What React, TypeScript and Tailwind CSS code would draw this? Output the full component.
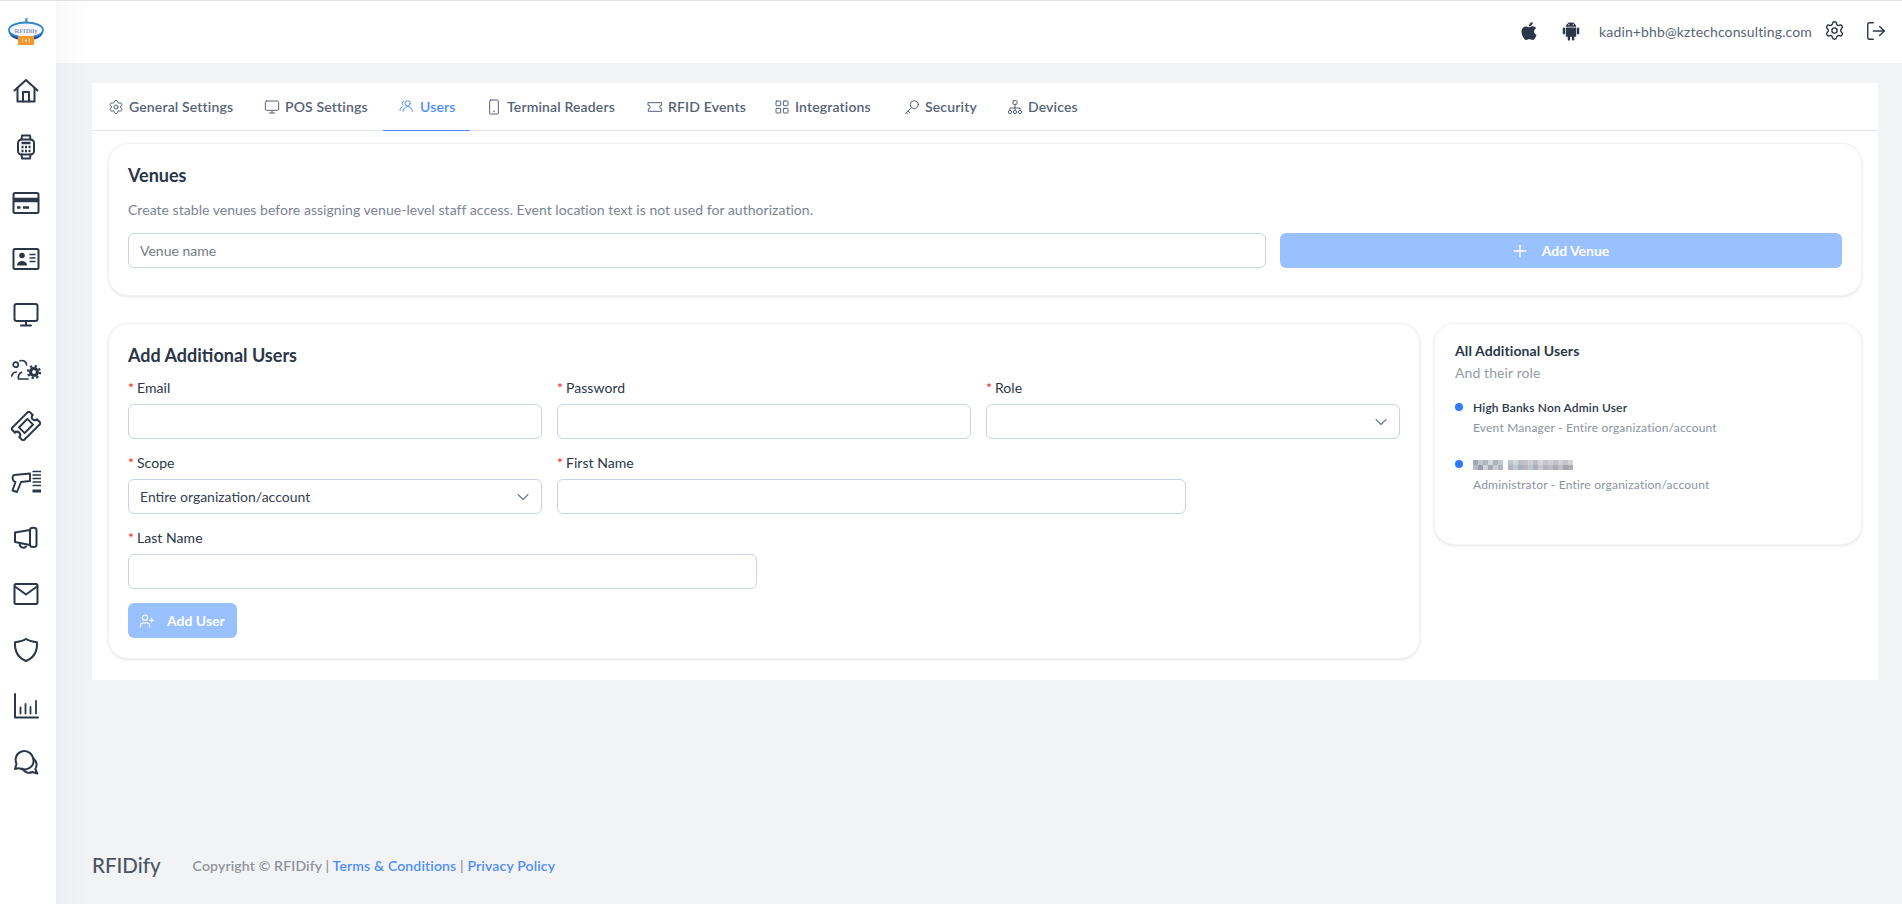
import React from "react";
import { AiFillAndroid, AiFillApple } from "react-icons/ai";
import { ChevronDown, LayoutGrid, LogOut, Monitor, Plus, Settings, UserPlus } from "lucide-react";

const iconProps = {
  width: 28,
  height: 28,
  viewBox: "0 0 28 28",
  fill: "none",
  stroke: "#2b3648",
  strokeWidth: 2,
  strokeLinejoin: "round" as const,
  strokeLinecap: "round" as const,
};

const wideProps = { ...iconProps, width: 30, height: 30, viewBox: "0 0 30 30" };

const navIcons: React.ReactNode[] = [
  <svg key="home" {...iconProps}>
    <path d="M2.500 13.500 14 3l11.500 10.500" />
    <path d="M5.500 11v13.500h17V11" />
    <path d="M11 24.500V15h6v9.500" />
  </svg>,
  <svg key="watch" {...iconProps}>
    <rect x="6" y="6.500" width="16" height="15" rx="3.500" />
    <path d="M9.500 6.500 10 2.500h8l.5 4M9.500 21.500 10 25.500h8l.5-4" />
    <path d="M9.500 10h9" strokeWidth="2.500" strokeLinecap="butt" />
    <path d="M9.500 14h9M9.500 18h9" strokeWidth="2.500" strokeDasharray="2 1.500" strokeLinecap="butt" />
  </svg>,
  <svg key="card" {...iconProps}>
    <rect x="1.500" y="4" width="25" height="20" rx="1.500" />
    <path d="M2 11h24" strokeWidth="4.500" strokeLinecap="butt" />
    <path d="M5 18.500h3.500M11 18.500h6" strokeWidth="2.500" strokeLinecap="butt" />
  </svg>,
  <svg key="id" {...iconProps}>
    <rect x="1.500" y="4" width="25" height="20" rx="1.500" />
    <circle cx="10" cy="10.500" r="2.800" fill="#2b3648" stroke="none" />
    <path d="M5 20.500c0-6 10-6 10 0z" fill="#2b3648" stroke="none" />
    <path d="M17.500 9.500h6M17.500 13h6M17.500 16.500h6" strokeWidth="1.600" strokeLinecap="butt" />
  </svg>,
  <svg key="monitor" {...iconProps}>
    <rect x="2.500" y="3" width="23" height="17" rx="2" />
    <path d="M14 20v4.500M9 24.500h10" />
  </svg>,
  <svg key="staff" {...wideProps}>
    <g transform="translate(0 5)">
      <circle cx="4.700" cy="4.700" r="2.500" strokeWidth="1.700" />
      <path d="M.8 16c.3-2.300 2-3.700 4.500-4" strokeWidth="1.700" />
      <path d="M9 .8c3.500-1 6.500 1 6.500 4" strokeWidth="1.700" />
      <path d="M17 19H7.500c-.5-3 .5-5.500 3-6.800" strokeWidth="1.700" />
      <circle cx="23" cy="12" r="5" fill="#2b3648" stroke="none" />
      <circle cx="23" cy="12" r="6" fill="none" strokeWidth="2.200" strokeDasharray="2.300 2.400" strokeLinecap="butt" />
      <circle cx="23" cy="12" r="1.900" fill="#fff" stroke="none" />
    </g>
  </svg>,
  <svg key="ticket" {...wideProps}>
    <g transform="rotate(-45 15 15)">
      <path d="M2.500 6.500h25v5.500a3 3 0 0 0 0 6v5.500h-25V18a3 3 0 0 0 0-6z" />
      <rect x="9" y="11" width="12" height="8" />
    </g>
  </svg>,
  <svg key="scanner" {...wideProps}>
    <g transform="translate(0 3.500)">
      <path d="M3 4.500 19 3v7.500l-9 1L6 21.500 1.500 20l3-8.500C1.500 11 .5 6 3 4.500z" strokeWidth="1.900" />
      <path d="M21.500 1h8.500M21.500 4.500h8.500M21.500 8h8.500M21.500 11.500h8.500M21.500 15h8.500" strokeWidth="1.700" strokeLinecap="butt" />
      <path d="M21.500 20.500h8.500" strokeWidth="3" strokeLinecap="butt" />
    </g>
  </svg>,
  <svg key="horn" {...iconProps}>
    <path d="M3 8.500 18 6v15L3 18z" />
    <path d="M18 6c0-3 6.500-3 6.500 0v15c0 2.500-6.500 2.500-6.500 0" />
    <path d="M8 19.500c-.8 4 3.500 5.500 6 3" />
  </svg>,
  <svg key="mail" {...iconProps}>
    <rect x="2.500" y="4" width="23" height="20" rx="1.500" />
    <path d="M3 6.500 14 14.500l11-8" />
  </svg>,
  <svg key="shield" {...iconProps}>
    <path d="M14 3c3 2 6.500 3 11 3.200.5 9-3 15.500-11 18.800C6 21.700 2.500 15.200 3 6.200 7.500 6 11 5 14 3z" />
  </svg>,
  <svg key="chart" {...iconProps}>
    <path d="M3 2v23.500h23" />
    <path d="M8.500 15.500v6M13.500 12v9.500M18.500 15v6.500M24 9v12.500" strokeWidth="1.800" />
  </svg>,
  <svg key="chat" {...iconProps}>
    <path d="M3 21c3-1 4-1 5-.5 6 2.500 14-1 13.500-8C21 5 14.500 2 9.500 3.500 4 5.500 2.500 11 4.500 16z" />
    <path d="M21.500 10.500c4 3.500 3.500 8 1.800 10.500l2 4.500-5-1.500c-3 1.500-7.500 1-10-3.500" />
  </svg>,
];

const Logo = () => (
  <svg width="38" height="28" viewBox="0 0 38 28" fill="none">
    <path d="M18 7V2l2.500-1.500V7z" fill="#5a8fb8" />
    <ellipse cx="19" cy="13" rx="17" ry="7.500" fill="#f4f6fb" stroke="#2f86c9" strokeWidth="1.800" />
    <path d="M1.500 15c2 6 8 7.500 11 7.500V20C8 20 4 18.500 1.500 15zM36.500 15c-2 6-8 7.500-11 7.500V20c4.500 0 8.500-1.500 11-5z" fill="#1f4fa3" />
    <rect x="11" y="19" width="16" height="9" fill="#f4962a" />
    <circle cx="19" cy="23.500" r="1" fill="#fff" />
    <path d="M16 21.500c-1 1.300-1 2.700 0 4M22 21.500c1 1.300 1 2.700 0 4" stroke="#fff" strokeWidth=".7" />
    <text x="19" y="15.500" textAnchor="middle" fontSize="6.500" fontWeight="700" fontFamily="'Liberation Serif', serif" fill="#8d93c4">
      RFIDify
    </text>
  </svg>
);

const tabIcon = {
  width: 16,
  height: 16,
  viewBox: "0 0 24 24",
  fill: "none",
  stroke: "currentColor",
  strokeWidth: 1.500,
  strokeLinecap: "round" as const,
  strokeLinejoin: "round" as const,
};

const TeamIcon = () => (
  <svg {...tabIcon}>
    <circle cx="13" cy="8" r="4" />
    <path d="M6 20c0-4 3-7 7-7s7 3 7 7M7 5a3.500 3.500 0 0 0-1 6M1.500 19c0-2.500 1-5 3.500-6" />
  </svg>
);

const TerminalIcon = () => (
  <svg {...tabIcon}>
    <rect x="5.500" y="1.500" width="13" height="21" rx="1.500" />
    <path d="M12 18.500h.01" strokeWidth="2.500" />
  </svg>
);

const EventIcon = () => (
  <svg {...tabIcon}>
    <path d="M2 5.500h20v3.800a2.700 2.700 0 0 0 0 5.400v3.800H2v-3.800a2.700 2.700 0 0 0 0-5.400z" />
  </svg>
);

const KeyIcon = () => (
  <svg {...tabIcon}>
    <circle cx="15.500" cy="8.500" r="6" />
    <path d="M11 13 2.500 21.500M6 18l2.500 2.500M3.500 20.500 5.500 22.500" />
  </svg>
);

const TreeIcon = () => (
  <svg {...tabIcon}>
    <rect x="9" y="2.500" width="6" height="5.500" rx="1" />
    <path d="M12 8v5M4.500 17v-3.500h15V17M12 13v4" />
    <circle cx="4.500" cy="19.500" r="2.500" />
    <circle cx="12" cy="19.500" r="2.500" />
    <circle cx="19.500" cy="19.500" r="2.500" />
  </svg>
);

const tabs = [
  { label: "General Settings", icon: <Settings size={16} strokeWidth={1.500} />, width: "w-[156px]" },
  { label: "POS Settings", icon: <Monitor size={16} strokeWidth={1.500} />, width: "w-[135px]" },
  { label: "Users", icon: <TeamIcon />, width: "w-[87px]", active: true },
  { label: "Terminal Readers", icon: <TerminalIcon />, width: "w-[161px]" },
  { label: "RFID Events", icon: <EventIcon />, width: "w-[127px]" },
  { label: "Integrations", icon: <LayoutGrid size={16} strokeWidth={1.500} />, width: "w-[130px]" },
  { label: "Security", icon: <KeyIcon />, width: "w-[103px]" },
  { label: "Devices", icon: <TreeIcon />, width: "w-[101px]" },
];

const blurTop = ["#a0a6b4", "#c2c6ce", "#b0b5c0", "#d6d8dc", "#aeb3be", "#c4c8d0"];
const blurBottom = ["#b8bcc6", "#9aa0ae", "#d0d2d8", "#a4a9b6", "#c8cbd2", "#b2b6c0"];
const blurTop2 = ["#c0c4cc", "#d4d6da", "#b8c0cc", "#c8c2c2", "#cdd0d6", "#bcbec6", "#d8d8dc", "#c6c6cc", "#cfd0d4", "#c0c0c6", "#d2d2d6", "#c4c4ca", "#d6d6da"];
const blurBottom2 = ["#b0b4c0", "#c4c6cc", "#a8b0be", "#bcb4b4", "#c0c4cc", "#aaadb8", "#c6c6cc", "#b4b2ba", "#bcbcc2", "#acabb2", "#c0bec4", "#a6a4ac", "#aeacb4"];

const Field = ({
  label,
  width,
  value,
  select,
}: {
  label: string;
  width: string;
  value?: string;
  select?: boolean;
}) => (
  <div className={width}>
    <div className="h-[26px] text-[14px] leading-[20px] tracking-[0.05px] text-[#2b3648]">
      <span className="text-[#ff2020] mr-[3px]">*</span>
      {label}
    </div>
    <div className="h-[35px] px-[11px] flex items-center justify-between rounded-md border border-[#c9d3e3] bg-white text-[14px] text-[#374151]">
      <span>{value}</span>
      {select && <ChevronDown size={20} strokeWidth={1.300} className="text-[#6b7a90] -mr-[3px]" />}
    </div>
  </div>
);

export default function App() {
  return (
    <div className="h-[904px] w-[1902px] overflow-hidden flex flex-col bg-white font-['Lato','Noto_Sans',sans-serif]">
      <div className="h-px bg-[#e2e2e2]" />
      <div className="flex flex-1 min-h-0">
        {/* Sidebar */}
        <aside className="w-[56px] bg-white flex flex-col items-center pt-[16px]">
          <div className="h-[46px] mr-[4px]">
            <Logo />
          </div>
          <nav className="flex flex-col items-center w-full">
            {navIcons.map((icon, i) => (
              <div key={i} className="h-[55.900px] w-full flex items-center justify-center pr-[4px]">
                {icon}
              </div>
            ))}
          </nav>
        </aside>

        <div className="flex-1 flex flex-col bg-[#f2f3f5] bg-[linear-gradient(to_right,#edeef1,#f2f3f5_36px)]">
          {/* Top bar */}
          <header className="h-[62px] bg-[linear-gradient(to_right,#f9f9fa,#ffffff_36px)] flex items-center justify-end pr-[15px] text-[#2b3648]">
            <AiFillApple size={22} className="mr-[20px] mb-[2px]" />
            <AiFillAndroid size={22} className="mr-[17px] mb-[2px]" />
            <span className="text-[14px] tracking-[0.13px] text-[#5b6474] mr-[12px] mb-[1px]">kadin+bhb@kztechconsulting.com</span>
            <Settings size={21} strokeWidth={1.600} className="mr-[20px] mb-[3px]" />
            <LogOut size={22} strokeWidth={1.500} className="mb-[3px]" />
          </header>

          <main className="flex-1 flex flex-col pl-[36px] pr-[24px] pt-[20px]">
            <div className="h-[597px] bg-white">
              {/* Tabs */}
              <div className="h-[48px] flex border-b border-[#e3e8ef]">
                {tabs.map((t) => (
                  <div
                    key={t.label}
                    className={`${t.width} h-[48px] shrink-0 flex items-center pl-[16px] gap-[5px] text-[14px] tracking-[0.15px] font-semibold pb-[1px] ${
                      t.active ? "text-[#4d8dff] border-b border-[#4d8dff]" : "text-[#566276]"
                    }`}
                  >
                    {t.icon}
                    <span>{t.label}</span>
                  </div>
                ))}
              </div>

              <div className="px-[16px] pt-[12px] flex flex-col gap-[27px]">
                {/* Venues */}
                <section className="h-[153px] rounded-[20px] border border-[#f1f2f4] bg-white shadow-[0_1px_3px_rgba(0,0,0,0.1)] px-[19px] pt-[17px]">
                  <h2 className="text-[18px] leading-[28px] font-bold text-[#2b3648]">Venues</h2>
                  <p className="mt-[11px] text-[14px] leading-[20px] tracking-[0.04px] text-[#7b8494]">
                    Create stable venues before assigning venue-level staff access. Event location text is not used for authorization.
                  </p>
                  <div className="mt-[13px] flex gap-[14px]">
                    <div className="w-[1138px] h-[35px] px-[11px] flex items-center rounded-md border border-[#c9d3e3] text-[14px] text-[#757c88]">
                      Venue name
                    </div>
                    <div className="flex-1 h-[35px] rounded-md bg-[#99c1ff] flex items-center justify-center gap-[12px] pr-[3px] text-white text-[14px] font-bold">
                      <Plus size={20} strokeWidth={1.800} />
                      Add Venue
                    </div>
                  </div>
                </section>

                <div className="flex gap-[14px] items-start">
                  {/* Add user form */}
                  <section className="w-[1312px] h-[336px] rounded-[20px] border border-[#f1f2f4] bg-white shadow-[0_1px_3px_rgba(0,0,0,0.1)] px-[19px] pt-[17px]">
                    <h2 className="text-[18px] leading-[28px] font-bold text-[#2b3648]">Add Additional Users</h2>
                    <div className="mt-[9px] flex flex-col gap-[14px]">
                      <div className="flex gap-[15px]">
                        <Field label="Email" width="w-[414px]" />
                        <Field label="Password" width="w-[414px]" />
                        <Field label="Role" width="w-[414px]" select />
                      </div>
                      <div className="flex gap-[15px]">
                        <Field label="Scope" width="w-[414px]" value="Entire organization/account" select />
                        <Field label="First Name" width="w-[629px]" />
                      </div>
                      <Field label="Last Name" width="w-[629px]" />
                    </div>
                    <div className="mt-[14px] w-[109px] h-[35px] rounded-md bg-[#99c1ff] flex items-center pl-[11px] gap-[12px] text-white text-[14px] font-bold">
                      <UserPlus size={16} strokeWidth={1.600} />
                      Add User
                    </div>
                  </section>

                  {/* User list */}
                  <section className="flex-1 h-[222px] rounded-[20px] border border-[#f1f2f4] bg-white shadow-[0_1px_3px_rgba(0,0,0,0.1)] px-[20px] pt-[16px]">
                    <h3 className="text-[14px] leading-[22px] tracking-[0.1px] font-bold text-[#2b3648]">All Additional Users</h3>
                    <p className="text-[14px] leading-[22px] tracking-[0.1px] text-[#949ba6]">And their role</p>
                    <ul className="mt-[14px] flex flex-col gap-[17px]">
                      <li className="flex gap-[10px]">
                        <span className="mt-[5px] size-[8px] rounded-full bg-[#2f7bff]" />
                        <div>
                          <div className="text-[12px] leading-[20px] tracking-[0.15px] font-semibold text-[#2b3648]">High Banks Non Admin User</div>
                          <div className="text-[12px] leading-[20px] tracking-[0.2px] text-[#8b93a1]">Event Manager - Entire organization/account</div>
                        </div>
                      </li>
                      <li className="flex gap-[10px]">
                        <span className="mt-[5px] size-[8px] rounded-full bg-[#2f7bff]" />
                        <div>
                          <div className="h-[20px] flex items-center gap-[5px]">
                            <div className="grid grid-cols-[repeat(6,5px)] grid-rows-[repeat(2,5px)]">
                              {[...blurTop, ...blurBottom].map((c, i) => (
                                <span key={i} style={{ backgroundColor: c }} />
                              ))}
                            </div>
                            <div className="grid grid-cols-[repeat(13,5px)] grid-rows-[repeat(2,5px)]">
                              {[...blurTop2, ...blurBottom2].map((c, i) => (
                                <span key={i} style={{ backgroundColor: c }} />
                              ))}
                            </div>
                          </div>
                          <div className="text-[12px] leading-[20px] tracking-[0.2px] text-[#8b93a1]">Administrator - Entire organization/account</div>
                        </div>
                      </li>
                    </ul>
                  </section>
                </div>
              </div>
            </div>

            {/* Footer */}
            <footer className="mt-[170px] flex items-center">
              <span className="text-[20.500px] text-[#4b5563] font-medium mr-[32px]">RFIDify</span>
              <span className="text-[14px] tracking-[0.16px] font-semibold text-[#8f949c]">
                Copyright © RFIDify |{" "}
                <span className="text-[#4d8dff]">Terms &amp; Conditions</span>
                {" "}|{" "}
                <span className="text-[#4d8dff]">Privacy Policy</span>
              </span>
            </footer>
          </main>
        </div>
      </div>
    </div>
  );
}
